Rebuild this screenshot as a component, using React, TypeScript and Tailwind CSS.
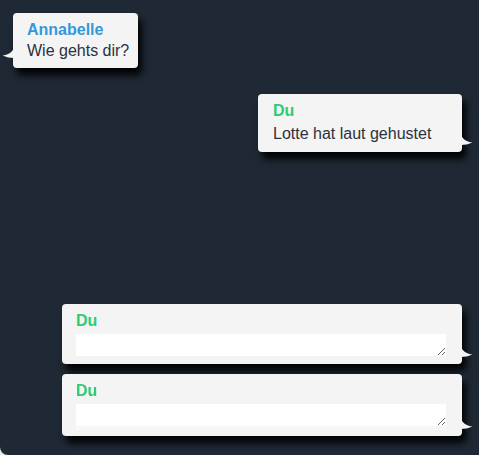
import React from 'react';

// ── Tails ────────────────────────────────────────────────────────────────────

function TailLeft() {
  return (
    <svg className="absolute left-[-11px] bottom-[10px]" width="12" height="10" viewBox="0 0 12 10">
      <path d="M12 0 C10 4.5 6 7 0.5 7.5 C4 9.2 8.5 10 12 10 Z" fill="#f4f4f4" />
    </svg>
  );
}

function TailRight() {
  return (
    <svg className="absolute right-[-11px] bottom-[7px]" width="12" height="10" viewBox="0 0 12 10">
      <path d="M0 0 C2 4.5 6 7 11.5 7.5 C8 9.2 3.5 10 0 10 Z" fill="#f4f4f4" />
    </svg>
  );
}

// ── Bubbles ──────────────────────────────────────────────────────────────────

const bubble =
  'relative bg-[#f4f4f4] rounded-[4px] shadow-[4px_7px_7px_rgba(0,0,0,0.95)] text-[16px] font-["Liberation_Sans",Arial,sans-serif]';

function TextBubble({ name, text, color, side, className = '' }: { name: string; text: string; color: string; side: 'left' | 'right'; className?: string }) {
  return (
    <div className={`${bubble} ${className}`}>
      {side === 'left' ? <TailLeft /> : <TailRight />}
      <div className={`font-bold leading-[21px] ${color}`}>{name}</div>
      <div className="leading-[22px] text-[#2c3140]">{text}</div>
    </div>
  );
}

function InputBubble({ dotted }: { dotted?: boolean }) {
  return (
    <div className={`${bubble} w-[400px] pl-[14px] pr-[16px] pt-[6px] ${dotted ? 'pb-[6px]' : 'pb-[8px]'}`}>
      <TailRight />
      <div className="font-bold leading-[21px] text-[#2ecc71]">Du</div>
      <textarea className="mt-[3px] block w-full h-[22px] bg-white border-0 outline-none p-0" rows={1} />
      {dotted && (
        <div className="mt-[1px]">
          <div className="border-t border-dotted border-white" />
          <div className="mt-[1px] border-t border-dotted border-white" />
        </div>
      )}
    </div>
  );
}

export default function App() {
  return (
    <div className="w-[479px] h-[455px] bg-[#e8e8e8]">
      <div className="h-full bg-[#1e2935] rounded-bl-[8px] flex flex-col pt-[13px] pl-[13px] pr-[17px]">
        <div className="self-start">
          <TextBubble
            name="Annabelle"
            text="Wie gehts dir?"
            color="text-[#3498db]"
            side="left"
            className="pl-[14px] pr-[9px] pt-[6px] pb-[6px]"
          />
        </div>
        <div className="self-end mt-[26px]">
          <TextBubble
            name="Du"
            text="Lotte hat laut gehustet"
            color="text-[#2ecc71]"
            side="right"
            className="w-[204px] pl-[15px] pt-[6px] pb-[7px] [&>div:last-child]:mt-[2px]"
          />
        </div>
        <div className="self-end mt-[152px] flex flex-col gap-[10px]">
          <InputBubble />
          <InputBubble dotted />
        </div>
      </div>
    </div>
  );
}
